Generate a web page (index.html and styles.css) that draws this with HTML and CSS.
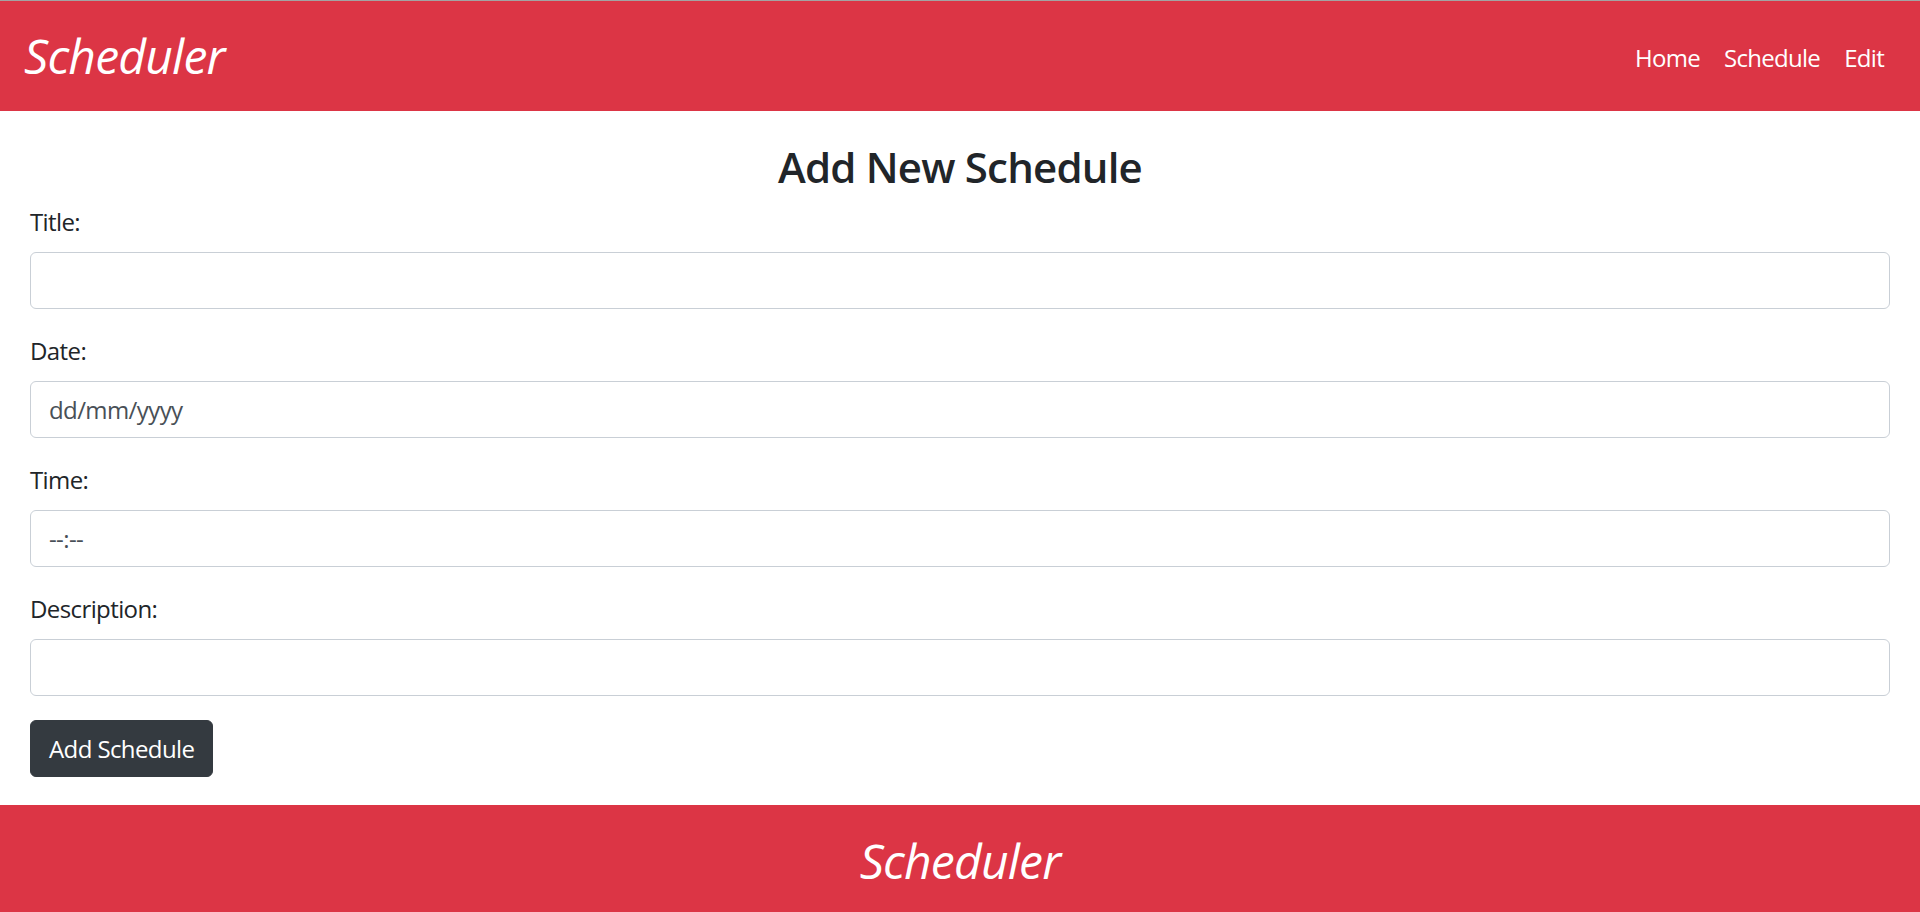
FILE: index.html
```html
<!DOCTYPE html>
<html lang="en">
<head>
<meta charset="utf-8">
<title>Scheduler</title>
<link rel="stylesheet" href="styles.css">
</head>
<body>
<header class="navbar">
  <a class="brand" href="#">Scheduler</a>
  <nav class="nav">
    <a class="nav-link" href="#">Home</a>
    <a class="nav-link" href="#">Schedule</a>
    <a class="nav-link" href="#">Edit</a>
  </nav>
</header>
<main class="container">
  <h3 class="page-title">Add New Schedule</h3>
  <form class="form">
    <div class="form-group">
      <label class="label" for="title">Title:</label>
      <input class="control" id="title" type="text">
    </div>
    <div class="form-group">
      <label class="label" for="date">Date:</label>
      <input class="control" id="date" type="text" placeholder="dd/mm/yyyy">
    </div>
    <div class="form-group">
      <label class="label" for="time">Time:</label>
      <input class="control" id="time" type="text" placeholder="--:--">
    </div>
    <div class="form-group">
      <label class="label" for="desc">Description:</label>
      <input class="control" id="desc" type="text">
    </div>
    <button class="btn" type="button">Add Schedule</button>
  </form>
</main>
<footer class="footer">
  <span class="footer-brand">Scheduler</span>
</footer>
</body>
</html>
```
FILE: styles.css
```css
html, body {
  margin: 0;
  padding: 0;
}
body {
  font-family: "Open Sans", "Noto Sans", sans-serif;
  font-size: 24px;
  line-height: 1.5;
  letter-spacing: -0.6px;
  color: #212529;
  background: #fff;
}
.navbar {
  border-top: 1px solid #a3a3a3;
  background: #dc3545;
  height: 110px;
  display: flex;
  align-items: center;
  justify-content: space-between;
  padding: 0 24px;
}
.brand {
  color: #fff;
  font-style: italic;
  font-size: 48px;
  line-height: 72px;
  letter-spacing: -0.8px;
  text-decoration: none;
}
.nav {
  display: flex;
  margin-top: 4px;
}
.nav-link {
  color: #fff;
  text-decoration: none;
  padding: 0 12px;
  font-size: 24px;
  letter-spacing: -0.7px;
}
.container {
  padding: 0 30px;
}
.page-title {
  text-align: center;
  font-size: 42px;
  font-weight: 600;
  line-height: 1.2;
  letter-spacing: -0.8px;
  margin: 31px 0 12px;
}
.form-group {
  margin-bottom: 24px;
}
.label {
  display: block;
  margin-bottom: 12px;
}
.control {
  display: block;
  box-sizing: border-box;
  width: 100%;
  height: 57px;
  padding: 9px 18px;
  font-family: inherit;
  font-size: 24px;
  line-height: 1.5;
  letter-spacing: -0.6px;
  color: #495057;
  background: #fff;
  border: 1.5px solid #c9cfd6;
  border-radius: 6px;
  outline: none;
}
.control::placeholder {
  color: #495057;
  opacity: 1;
}
.btn {
  font-family: inherit;
  font-size: 24px;
  line-height: 1.5;
  letter-spacing: -0.6px;
  color: #fff;
  background: #343a40;
  border: 1px solid #343a40;
  border-radius: 6px;
  padding: 9px 18px;
  height: 57px;
}
.footer {
  margin-top: 28px;
  background: #dc3545;
  text-align: center;
  padding: 20px 0 15px;
}
.footer-brand {
  color: #fff;
  font-style: italic;
  font-size: 48px;
  line-height: 72px;
  letter-spacing: -0.8px;
}
```
